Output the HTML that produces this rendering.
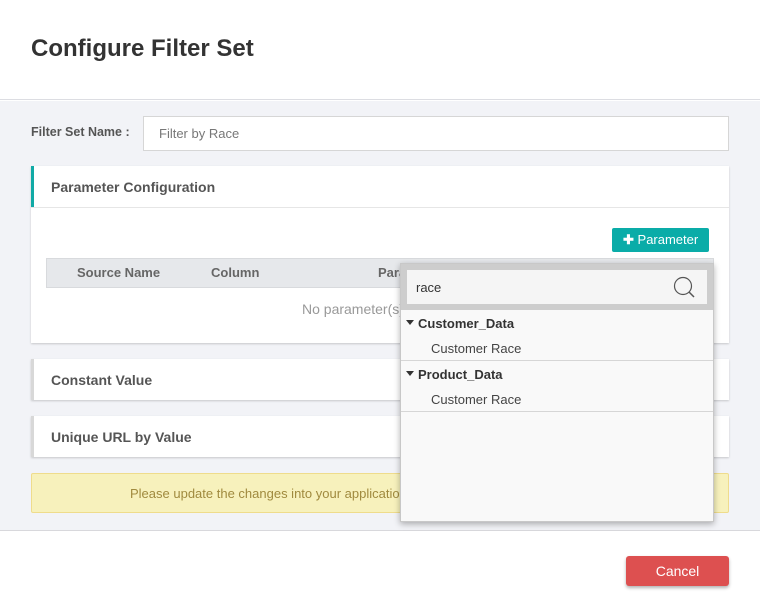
<!DOCTYPE html>
<html><head><style>
*{margin:0;padding:0;box-sizing:border-box}
body{width:760px;height:612px;position:relative;background:#fff;font-family:"Liberation Sans",Arial,sans-serif;overflow:hidden}
.a{position:absolute}
.panel{position:absolute;left:31px;width:698px;background:#fff;box-shadow:0 1px 2px rgba(0,0,0,.18)}
.ph{position:absolute;left:20px;font-weight:bold;font-size:14px;color:#555}
</style></head><body>
<div class="a" style="left:0;top:0;width:760px;height:100px;background:#fff;border-bottom:1px solid #dcdde2"></div>
<div class="a" style="left:31px;top:35px;font-size:24px;font-weight:bold;color:#333">Configure Filter Set</div>
<div class="a" style="left:0;top:101px;width:760px;height:430px;background:#f2f3f7;border-bottom:1px solid #d8d8dc"></div>
<div class="a" style="left:31px;top:125px;font-size:12.5px;font-weight:bold;color:#555">Filter Set Name :</div>
<div class="a" style="left:143px;top:116px;width:586px;height:35px;background:#fff;border:1px solid #d6d6d6;font-size:13px;color:#777;padding:9px 0 0 15px">Filter by Race</div>

<div class="panel" style="top:166px;height:177px">
 <div class="a" style="left:0;top:0;width:3px;height:41px;background:#11aaa6"></div>
 <div class="a" style="left:0;top:41px;width:698px;height:1px;background:#e6e6e6"></div>
 <div class="ph" style="top:13px">Parameter Configuration</div>
 <div class="a" style="left:581px;top:62px;width:97px;height:24px;background:#0aaca8;border-radius:2px;color:#fff;font-size:13px;padding:4px 0 0 11px"><b style="font-size:13px;line-height:12px">✚</b> Parameter</div>
 <div class="a" style="left:15px;top:92px;width:668px;height:30px;background:#e6e8eb;border:1px solid #d8dadd;font-size:13px;font-weight:bold;color:#666">
  <span class="a" style="left:30px;top:6px">Source Name</span><span class="a" style="left:164px;top:6px">Column</span><span class="a" style="left:331px;top:6px">Parameter</span></div>
 <div class="a" style="left:271px;top:135px;font-size:14px;color:#999">No parameter(s) found</div>
</div>
<div class="panel" style="top:359px;height:41px"><div class="a" style="left:0;top:0;width:3px;height:41px;background:#d8d8d8"></div><div class="ph" style="top:13px">Constant Value</div></div>
<div class="panel" style="top:416px;height:41px"><div class="a" style="left:0;top:0;width:3px;height:41px;background:#d8d8d8"></div><div class="ph" style="top:13px">Unique URL by Value</div></div>
<div class="a" style="left:31px;top:473px;width:698px;height:40px;background:#f7f1bc;border:1px solid #efdc8c;border-radius:2px;font-size:13px;color:#a08a3e;padding:12px 0 0 98px">Please update the changes into your application to reflect.</div>

<div class="a" style="left:400px;top:263px;width:314px;height:259px;background:#f9f9f9;border:1px solid #c8c8c8;box-shadow:0 2px 6px rgba(0,0,0,.3)">
 <div class="a" style="left:0;top:0;width:312px;height:46px;background:#cdcdcd"></div>
 <div class="a" style="left:6px;top:6px;width:300px;height:34px;background:#f5f5f5;font-size:13px;color:#333;padding:10px 0 0 9px">race</div>
 <svg class="a" style="left:271px;top:11px" width="26" height="26" viewBox="0 0 26 26"><circle cx="11" cy="11" r="8.5" fill="none" stroke="#555" stroke-width="1.2"/><path d="M17 17 L22 22" stroke="#555" stroke-width="1.5"/></svg>
 <svg class="a" style="left:5px;top:56px" width="8" height="5"><path d="M0 0H8L4 5Z" fill="#333"/></svg>
 <div class="a" style="left:17px;top:52px;font-size:13px;font-weight:bold;color:#333">Customer_Data</div>
 <div class="a" style="left:30px;top:77px;font-size:13px;color:#444">Customer Race</div>
 <div class="a" style="left:0;top:96px;width:312px;height:1px;background:#d6d6d6"></div>
 <svg class="a" style="left:5px;top:107px" width="8" height="5"><path d="M0 0H8L4 5Z" fill="#333"/></svg>
 <div class="a" style="left:17px;top:103px;font-size:13px;font-weight:bold;color:#333">Product_Data</div>
 <div class="a" style="left:30px;top:128px;font-size:13px;color:#444">Customer Race</div>
 <div class="a" style="left:0;top:147px;width:312px;height:1px;background:#d6d6d6"></div>
</div>

<div class="a" style="left:626px;top:556px;width:103px;height:30px;background:#dd5050;border-radius:3px;box-shadow:0 2px 3px rgba(0,0,0,.3);color:#fff;font-size:14px;text-align:center;line-height:30px">Cancel</div>
</body></html>
